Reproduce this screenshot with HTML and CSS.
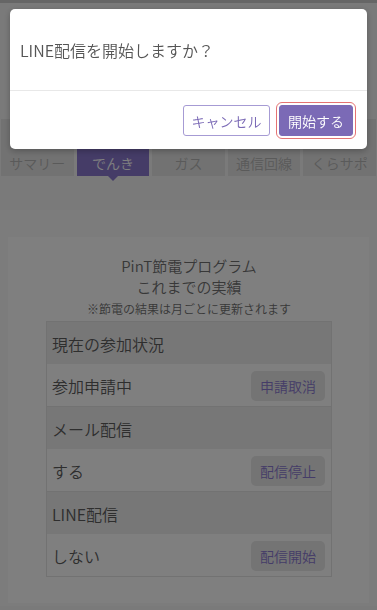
FILE: index.html
```html
<!DOCTYPE html>
<html lang="ja">
<head>
<meta charset="utf-8">
<title>PinT節電プログラム</title>
<link rel="stylesheet" href="styles.css">
</head>
<body>
<div class="page">
  <header class="topbar"></header>
  <div class="hero"></div>
  <nav class="tabs">
    <div class="tab">サマリー</div>
    <div class="tab active">でんき</div>
    <div class="tab">ガス</div>
    <div class="tab">通信回線</div>
    <div class="tab">くらサポ</div>
  </nav>
  <div class="band"></div>
  <main class="section">
    <div class="card">
      <h2 class="card-title">PinT節電プログラム<br>これまでの実績</h2>
      <p class="note">※節電の結果は月ごとに更新されます</p>
      <div class="status">
        <div class="row label">現在の参加状況</div>
        <div class="row value"><span>参加申請中</span><button class="mini">申請取消</button></div>
        <div class="row label">メール配信</div>
        <div class="row value"><span>する</span><button class="mini">配信停止</button></div>
        <div class="row label">LINE配信</div>
        <div class="row value"><span>しない</span><button class="mini">配信開始</button></div>
      </div>
    </div>
  </main>
</div>
<div class="overlay"></div>
<div class="dialog">
  <div class="dialog-head">LINE配信を開始しますか？</div>
  <div class="dialog-foot">
    <button class="btn btn-cancel">キャンセル</button>
    <button class="btn btn-primary">開始する</button>
  </div>
</div>
</body>
</html>
```
FILE: styles.css
```css
* { box-sizing: border-box; }
html, body { margin: 0; padding: 0; }
body {
  background: #f4f4f4;
  font-family: "Noto Sans CJK JP", "Noto Sans", sans-serif;
  font-weight: 350;
  color: #333;
  width: 377px;
  height: 610px;
  overflow: hidden;
}
.page { display: flex; flex-direction: column; }
.topbar { height: 3px; background: #cccccc; }
.hero { height: 116px; }
.tabs {
  display: flex;
  gap: 3px;
  padding: 0 1px;
  height: 57px;
}
.tab {
  flex: 1;
  background: #e4e4e4;
  color: #b4b4b4;
  font-size: 14px;
  line-height: 20px;
  display: flex;
  align-items: flex-end;
  justify-content: center;
  padding-bottom: 3px;
  position: relative;
}
.tab.active { background: #8a78cf; color: #ffffff; }
.tab.active::after {
  content: "";
  position: absolute;
  left: 50%;
  bottom: -5px;
  margin-left: -5px;
  border-top: 5px solid #8a78cf;
  border-left: 5px solid transparent;
  border-right: 5px solid transparent;
}
.band { height: 34px; }
.section {
  background: #f8f8f8;
  padding: 27px 8px 3px;
}
.card {
  background: #ffffff;
  padding: 18px 37px 26px 38px;
}
.card-title {
  margin: 0;
  text-align: center;
  font-size: 15px;
  line-height: 21px;
  font-weight: 350;
  color: #707070;
}
.note {
  margin: 3px 0 4px;
  text-align: center;
  font-size: 12px;
  line-height: 17px;
  color: #707070;
}
.status { border: 1px solid #e4e4e4; }
.row {
  display: flex;
  align-items: center;
  justify-content: space-between;
  padding: 1px 6px 0 5px;
  font-size: 16px;
  color: #5c5c5c;
}
.row.label { height: 42px; background: #eeeeee; }
.row.value { height: 43px; background: #ffffff; border-bottom: 1px solid #e4e4e4; }
.row.value:last-child { border-bottom: 0; height: 42px; }
.mini {
  font-family: inherit;
  font-weight: 350;
  font-size: 14px;
  color: #8a78d0;
  background: #e8e8e8;
  border: 0;
  border-radius: 5px;
  width: 74px;
  height: 30px;
  padding: 0;
}
.overlay {
  position: fixed;
  inset: 0;
  background: rgba(0, 0, 0, 0.5);
}
.dialog {
  position: fixed;
  top: 9px;
  left: 10px;
  width: 357px;
  background: #ffffff;
  border-radius: 5px;
  box-shadow: 0 2px 6px rgba(0, 0, 0, 0.25);
}
.dialog-head {
  height: 82px;
  display: flex;
  align-items: center;
  padding: 0 10px;
  font-size: 16px;
  color: #555555;
  border-bottom: 1px solid #e8e8e8;
}
.dialog-foot {
  display: flex;
  justify-content: flex-end;
  gap: 9px;
  padding: 14px 14px 13px;
}
.btn {
  font-family: inherit;
  font-weight: 350;
  font-size: 14px;
  height: 31px;
  border-radius: 3px;
  padding: 0;
}
.btn-cancel {
  width: 87px;
  background: #ffffff;
  color: #7b6ab6;
  border: 1px solid #a69bd4;
}
.btn-primary {
  width: 74px;
  background: #7b6ab6;
  color: #ffffff;
  border: 1px solid #7b6ab6;
  outline: 1px solid #e57373;
  outline-offset: 2px;
}
```
